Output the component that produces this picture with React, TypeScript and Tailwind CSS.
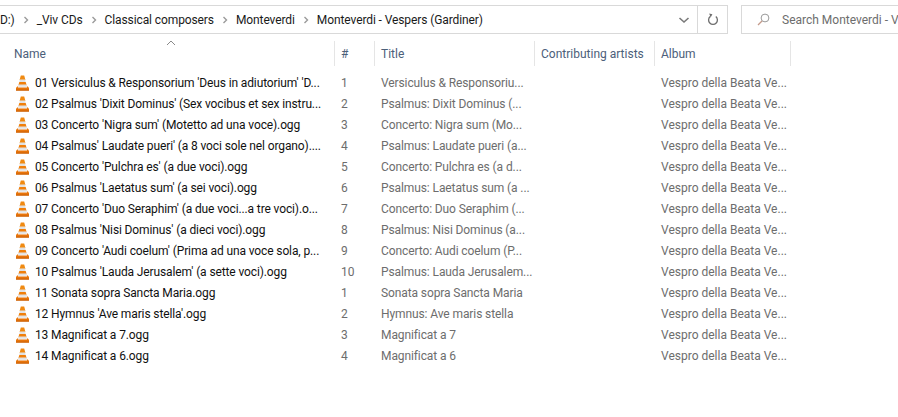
import React from 'react';

const tracks = [
  { name: "01 Versiculus & Responsorium 'Deus in adiutorium' 'D...", num: '1', title: 'Versiculus & Responsoriu...' },
  { name: "02 Psalmus 'Dixit Dominus' (Sex vocibus et sex instru...", num: '2', title: 'Psalmus: Dixit Dominus (...' },
  { name: "03 Concerto 'Nigra sum' (Motetto ad una voce).ogg", num: '3', title: 'Concerto: Nigra sum (Mo...' },
  { name: "04 Psalmus' Laudate pueri' (a 8 voci sole nel organo)....", num: '4', title: 'Psalmus: Laudate pueri (a...' },
  { name: "05 Concerto 'Pulchra es' (a due voci).ogg", num: '5', title: 'Concerto: Pulchra es (a d...' },
  { name: "06 Psalmus 'Laetatus sum' (a sei voci).ogg", num: '6', title: 'Psalmus: Laetatus sum (a ...' },
  { name: "07 Concerto 'Duo Seraphim' (a due voci...a tre voci).o...", num: '7', title: 'Concerto: Duo Seraphim (...' },
  { name: "08 Psalmus 'Nisi Dominus' (a dieci voci).ogg", num: '8', title: 'Psalmus: Nisi Dominus (a...' },
  { name: "09 Concerto 'Audi coelum' (Prima ad una voce sola, p...", num: '9', title: 'Concerto: Audi coelum (P...' },
  { name: "10 Psalmus 'Lauda Jerusalem' (a sette voci).ogg", num: '10', title: 'Psalmus: Lauda Jerusalem...' },
  { name: '11 Sonata sopra Sancta Maria.ogg', num: '1', title: 'Sonata sopra Sancta Maria' },
  { name: "12 Hymnus 'Ave maris stella'.ogg", num: '2', title: 'Hymnus: Ave maris stella' },
  { name: '13 Magnificat a 7.ogg', num: '3', title: 'Magnificat a 7' },
  { name: '14 Magnificat a 6.ogg', num: '4', title: 'Magnificat a 6' },
];

const crumbs = ['_Viv CDs', 'Classical composers', 'Monteverdi', 'Monteverdi - Vespers (Gardiner)'];

const Sep = () => (
  <svg width="6" height="8" viewBox="0 0 6 8" className="mx-[8px] shrink-0">
    <path d="M1.5 1 L4.5 4 L1.5 7" fill="none" stroke="#9a9a9a" strokeWidth="1.4" />
  </svg>
);

const Cone = () => (
  <svg width="15" height="16" viewBox="0 0 15 16" className="shrink-0">
    <path d="M5.8 0.5 H9.2 L10.4 5 H4.6 Z" fill="#f08a12" />
    <path d="M4.9 4.6 H10.1 L10.7 7 H4.3 Z" fill="#e2e2e2" />
    <path d="M4.3 7 H10.7 L11.6 10.2 H3.4 Z" fill="#f07f0a" />
    <path d="M3.5 9.6 H11.5 L12 11.8 H3 Z" fill="#e2e2e2" />
    <path d="M2.6 11 L1 13 V15.4 H14 V13 L12.4 11 L12 12.6 H3 Z" fill="#e8750a" />
    <path d="M1 14.6 H14 V15.6 H1 Z" fill="#c85f08" />
  </svg>
);

const HeaderCell = ({ label, width }: { label: string; width: string }) => (
  <div className={`${width} h-[25px] border-r border-[#e5e5e5] pl-[6px] flex items-center text-[12px] text-[#4c607a] shrink-0`}>
    {label}
  </div>
);

export default function App() {
  return (
    <div className="w-[898px] h-[417px] overflow-hidden bg-white text-[12px] font-['Roboto','Noto_Sans',sans-serif]">
      <div className="flex h-[29px] translate-y-[5px]">
        <div className="w-[729px] -ml-px h-[29px] border border-[#d9d9d9] flex items-center shrink-0 overflow-hidden">
          <div className="flex-1 flex items-center text-[#1a1a1a] whitespace-nowrap overflow-hidden tracking-[-0.1px]">
            <span>D:)</span>
            {crumbs.map((c) => (
              <React.Fragment key={c}>
                <Sep />
                <span>{c}</span>
              </React.Fragment>
            ))}
          </div>
          <svg width="12" height="8" viewBox="0 0 12 8" className="mr-[7px] shrink-0">
            <path d="M1.5 2 L6 6 L10.5 2" fill="none" stroke="#7a7a7a" strokeWidth="1.6" />
          </svg>
          <div className="w-[30px] h-full border-l border-[#d9d9d9] flex items-center justify-center shrink-0">
            <svg width="12" height="13" viewBox="0 0 12 13">
              <path d="M8.8 3.6 A4.4 4.4 0 1 1 3.2 3.6" fill="none" stroke="#6e6e6e" strokeWidth="1.3" />
              <path d="M2.2 0.6 L5.4 1.2 L3.6 4.6 Z" fill="#6e6e6e" />
            </svg>
          </div>
        </div>
        <div className="ml-[13px] w-[157px] h-[29px] border-y border-l border-[#d9d9d9] flex items-center pl-[15px] shrink-0 whitespace-nowrap overflow-hidden text-[#6d6d6d]">
          <svg width="13" height="13" viewBox="0 0 13 13" className="shrink-0 mr-[12px]">
            <circle cx="8" cy="5" r="3.9" fill="none" stroke="#9a9a9a" />
            <path d="M5 8 L1 12" stroke="#c49a8a" strokeWidth="1.2" />
          </svg>
          <span>Search Monteverdi - V</span>
        </div>
      </div>

      <div className="relative flex mt-[12px] h-[25px]">
        <svg width="10" height="6" viewBox="0 0 10 6" className="absolute left-[166px] top-[-1px]">
          <path d="M1 5 L5 1 L9 5" fill="none" stroke="#8a8a8a" />
        </svg>
        <div className="w-[335px] h-[25px] border-r border-[#e5e5e5] pl-[14px] flex items-center text-[#4c607a] shrink-0">Name</div>
        <HeaderCell label="#" width="w-[40px]" />
        <HeaderCell label="Title" width="w-[160px]" />
        <HeaderCell label="Contributing artists" width="w-[120px]" />
        <HeaderCell label="Album" width="w-[136px]" />
      </div>

      <div className="mt-[6px]">
        {tracks.map((t) => (
          <div key={t.name} className="flex h-[21px] items-center whitespace-nowrap">
            <div className="w-[335px] pl-[15px] flex items-center gap-[5px] text-[#111] shrink-0 tracking-[-0.12px]">
              <Cone />
              <span>{t.name}</span>
            </div>
            <div className="w-[40px] pl-[6px] text-[#6d6d6d] shrink-0">{t.num}</div>
            <div className="w-[160px] pl-[6px] text-[#6d6d6d] shrink-0 tracking-[-0.1px]">{t.title}</div>
            <div className="w-[120px] shrink-0" />
            <div className="w-[136px] pl-[6px] text-[#6d6d6d] shrink-0">Vespro della Beata Ve...</div>
          </div>
        ))}
      </div>
    </div>
  );
}
